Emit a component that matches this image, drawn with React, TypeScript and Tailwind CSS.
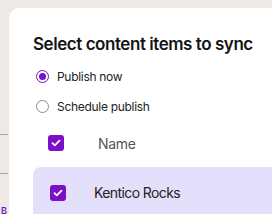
const Check = () => (
  <span className="flex h-4 w-4 shrink-0 items-center justify-center rounded-[3px] bg-[#7b10c6]">
    <svg width="10" height="8" viewBox="0 0 10 8" fill="none">
      <path d="M1.5 4.2 3.8 6.3 8.5 1.7" stroke="white" strokeWidth="1.8" strokeLinecap="round" strokeLinejoin="round" />
    </svg>
  </span>
);

const App = () => {
  return (
    <div className="flex h-[214px] w-[272px] overflow-hidden bg-[#ece9e6] font-['Inter',sans-serif]">
      <div className="relative w-[9px] shrink-0">
        <div className="absolute left-0 top-[134px] h-px w-[8px] bg-[#a9a4a0]" />
        <div className="absolute left-0 top-[173px] h-px w-[8px] bg-[#a9a4a0]" />
        <span className="absolute left-[1px] top-[206px] text-[9px] font-semibold leading-[10px] text-[#7b10c6]">B</span>
      </div>
      <div className="mt-[8px] flex-1 rounded-tl-[10px] bg-white pl-[24px] pt-[26px]">
        <h2 className="whitespace-nowrap text-[17px] font-semibold leading-[20px] tracking-[-0.45px] text-[#151515]">
          Select content items to sync
        </h2>
        <div className="mt-[16px] flex flex-col gap-[17px] pl-[3px] text-[12px] tracking-[-0.3px] text-[#222]">
          <label className="flex h-[13px] items-center gap-[8px]">
            <span className="flex h-[13px] w-[13px] items-center justify-center rounded-full border-[1.5px] border-[#7b10c6]">
              <span className="h-[7px] w-[7px] rounded-full bg-[#7b10c6]" />
            </span>
            Publish now
          </label>
          <label className="flex h-[13px] items-center gap-[8px]">
            <span className="h-[13px] w-[13px] rounded-full border border-[#8e8e8e]" />
            Schedule publish
          </label>
        </div>
        <div className="mt-[22px] flex h-[16px] items-center pl-[15px] text-[14px] tracking-[-0.3px] text-[#555]">
          <Check />
          <span className="ml-[34px]">Name</span>
        </div>
        <div className="mt-[16px] flex h-[60px] items-start rounded-tl-[8px] bg-[#e4e0fb] pl-[17px] pt-[18px] text-[14px] tracking-[-0.6px] text-[#222]">
          <Check />
          <span className="ml-[28px] whitespace-nowrap leading-[16px]">Kentico Rocks</span>
        </div>
      </div>
    </div>
  );
};

export default App;
